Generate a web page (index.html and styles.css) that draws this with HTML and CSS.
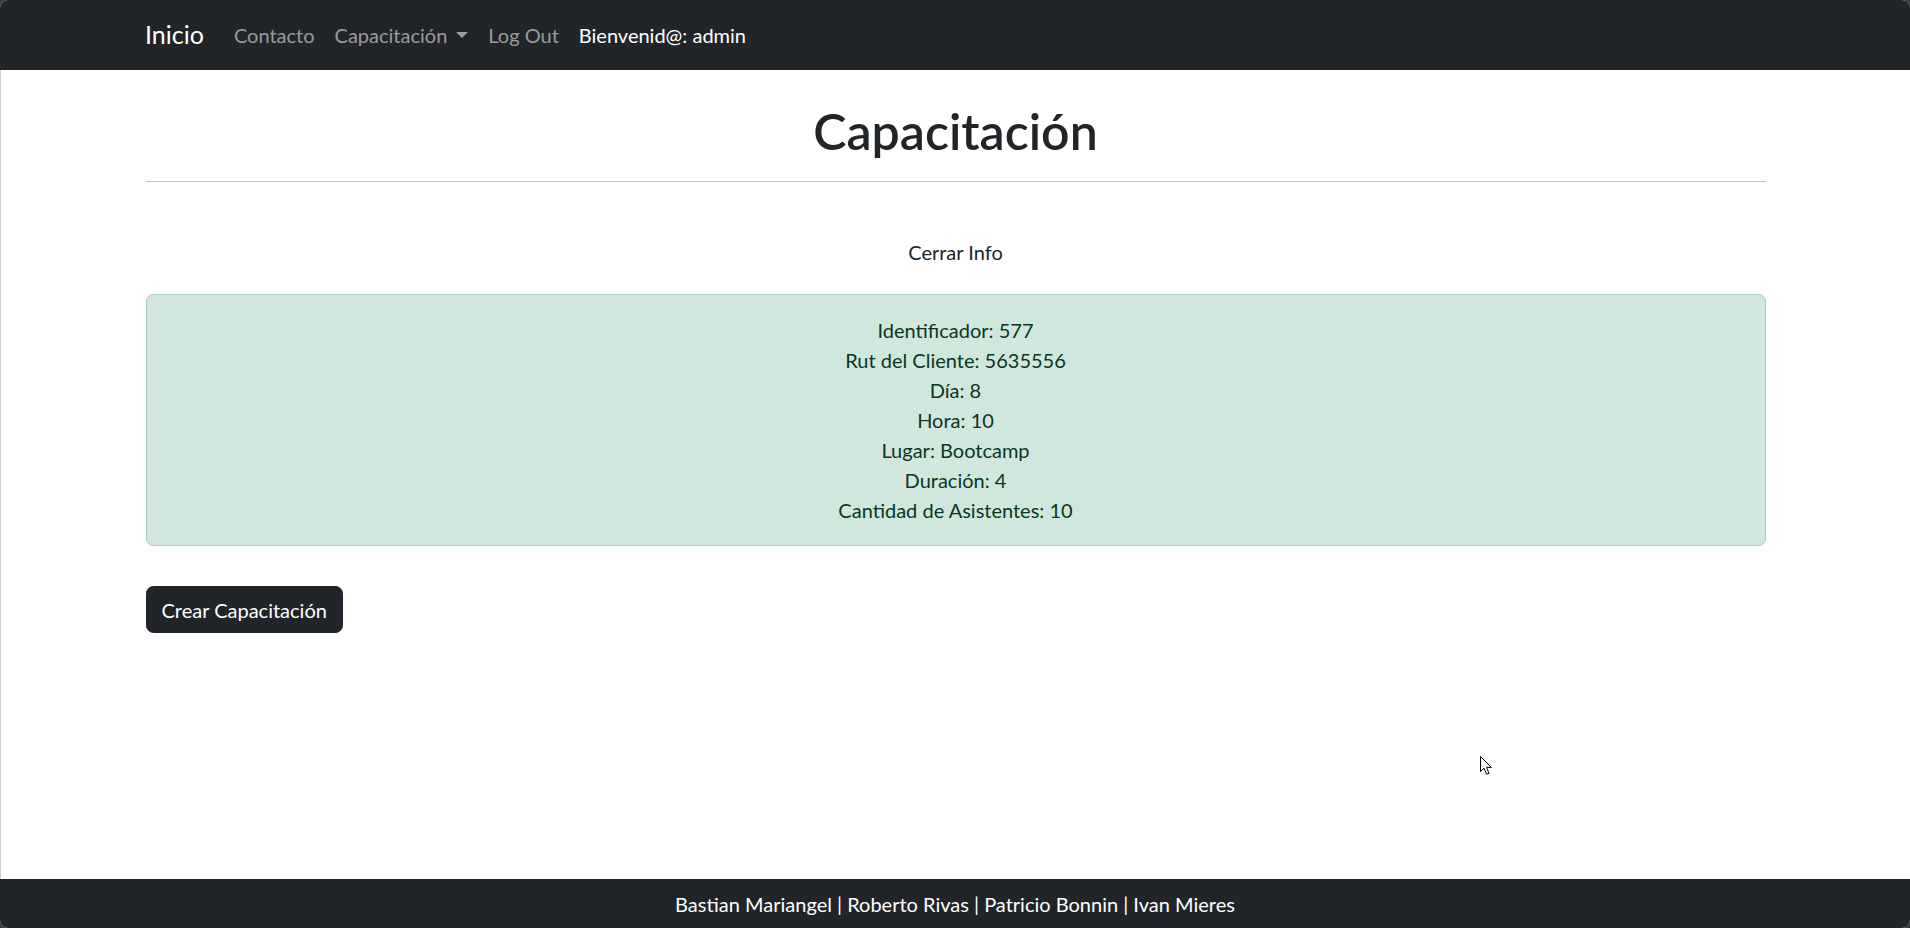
FILE: index.html
```html
<!DOCTYPE html>
<html lang="es">
<head>
<meta charset="utf-8">
<title>Capacitación</title>
<link rel="stylesheet" href="styles.css">
</head>
<body>
<div class="window">
  <nav class="navbar">
    <div class="container nav-inner">
      <a class="brand" href="#">Inicio</a>
      <ul class="nav-list">
        <li><a class="nav-link" href="#">Contacto</a></li>
        <li><a class="nav-link" href="#">Capacitación<span class="caret"></span></a></li>
        <li><a class="nav-link" href="#">Log Out</a></li>
        <li><span class="nav-link nav-user">Bienvenid@: admin</span></li>
      </ul>
    </div>
  </nav>
  <main class="main">
    <div class="container">
      <h1 class="title">Capacitación</h1>
      <hr class="divider">
      <div class="toggle-row"><button class="toggle-btn" type="button">Cerrar Info</button></div>
      <div class="alert">
        <div>Identificador: 577</div>
        <div>Rut del Cliente: 5635556</div>
        <div>Día: 8</div>
        <div>Hora: 10</div>
        <div>Lugar: Bootcamp</div>
        <div>Duración: 4</div>
        <div>Cantidad de Asistentes: 10</div>
      </div>
      <div class="actions"><button class="btn-dark" type="button">Crear Capacitación</button></div>
    </div>
  </main>
  <footer class="footer">Bastian Mariangel | Roberto Rivas | Patricio Bonnin | Ivan Mieres</footer>
  <svg class="cursor" width="13" height="20" viewBox="0 0 13 20" aria-hidden="true">
    <path d="M0.5 0.5 L0.5 15.5 L4 12.2 L6.6 18.3 L9 17.3 L6.5 11.4 L11.3 11.4 Z" fill="#fff" stroke="#000" stroke-width="1" stroke-linejoin="miter"/>
  </svg>
</div>
</body>
</html>
```
FILE: styles.css
```css
* { box-sizing: border-box; }
html, body { margin: 0; height: 100%; }
body {
  background: #3a3a3a;
  font-family: "Lato", "Open Sans", sans-serif;
  font-size: 20px;
  line-height: 1.5;
  color: #212529;
}
.window {
  height: 100vh;
  display: flex;
  flex-direction: column;
  border-radius: 8px;
  overflow: hidden;
  background: #fff;
  position: relative;
}
.container {
  width: 1650px;
  margin: 0 auto;
  padding: 0 15px;
}
.navbar {
  background: #212529;
  height: 70px;
  padding: 10px 0;
  flex: none;
}
.nav-inner { display: flex; align-items: center; height: 50px; }
.brand {
  color: #fff;
  text-decoration: none;
  font-size: 25px;
  line-height: 37.5px;
  padding: 6.25px 0;
  margin-right: 20px;
}
.nav-list { display: flex; list-style: none; margin: 0; padding: 0; }
.nav-link {
  display: flex;
  align-items: center;
  color: rgba(255,255,255,.55);
  text-decoration: none;
  padding: 10px;
  line-height: 30px;
}
.caret {
  display: inline-block;
  margin-left: 9px;
  border-top: 6px solid currentColor;
  border-left: 6px solid transparent;
  border-right: 6px solid transparent;
}
.nav-user { color: #fff; }
.main {
  flex: 1;
  border-left: 1px solid #cfcfcf;
}
.title {
  margin: 31px 0 10px;
  font-size: 50px;
  font-weight: 600;
  line-height: 1.2;
  text-align: center;
}
.divider {
  margin: 20px 0;
  border: 0;
  border-top: 1px solid #c8c9ca;
}
.toggle-row { text-align: center; margin: 46px 0 19px; }
.toggle-btn {
  font: inherit;
  color: #212529;
  background: transparent;
  border: 1px solid transparent;
  padding: 7.5px 15px;
  cursor: pointer;
}
.alert {
  background: #d1e7dd;
  border: 1px solid #a3cfbb;
  color: #0a3622;
  border-radius: 7.5px;
  padding: 20px;
  text-align: center;
  margin-bottom: 20px;
}
.actions { margin-top: 40px; display: flex; }
.btn-dark {
  font: inherit;
  line-height: 30px;
  color: #fff;
  background: #212529;
  border: 1px solid #212529;
  border-radius: 7.5px;
  padding: 7.5px 15px;
}
.footer {
  flex: none;
  height: 49px;
  background: #212529;
  color: #fff;
  display: flex;
  align-items: center;
  justify-content: center;
}
.cursor {
  position: absolute;
  left: 1480px;
  top: 756px;
}
```
